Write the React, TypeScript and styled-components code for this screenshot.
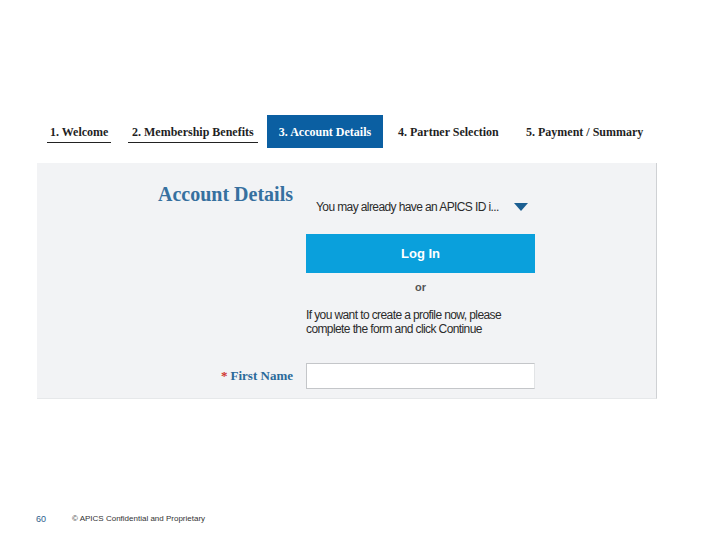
import styled, { createGlobalStyle } from "styled-components";

const GlobalStyle = createGlobalStyle`
  html, body {
    margin: 0;
    padding: 0;
    background: #ffffff;
  }
  body {
    font-family: "Liberation Sans", Arial, sans-serif;
  }
`;

const Page = styled.div`
  width: 720px;
  min-height: 540px;
  display: flex;
  flex-direction: column;
  padding-top: 115px;
  box-sizing: border-box;
`;

const Steps = styled.div`
  display: grid;
  grid-template-columns: 81px 139px 116px 143px auto;
  height: 33px;
  margin-left: 47px;
  margin-right: 63px;
`;

const Step = styled.div<{ $state: "done" | "active" | "todo"; $indent?: number }>`
  display: flex;
  align-items: ${(p) => (p.$state === "done" ? "flex-end" : "center")};
  justify-content: ${(p) => (p.$state === "active" ? "center" : "flex-start")};
  padding-bottom: ${(p) => (p.$state === "done" ? "5px" : "0")};
  padding-left: ${(p) => p.$indent ?? 0}px;
  background: ${(p) => (p.$state === "active" ? "#0b5fa2" : "transparent")};
  color: ${(p) => (p.$state === "active" ? "#ffffff" : "#1f1f1f")};
  font-family: "Liberation Serif", "DejaVu Serif", serif;
  font-weight: bold;
  font-size: 12px;
  line-height: 14px;
  white-space: nowrap;
`;

const StepLabel = styled.span<{ $underline?: boolean; $pad?: number }>`
  padding: 0 ${(p) => p.$pad ?? 0}px 3px;
  border-bottom: ${(p) => (p.$underline ? "1px solid #222" : "none")};
`;

const Panel = styled.div`
  margin: 15px 0 0 37px;
  width: 620px;
  box-sizing: border-box;
  background: #f2f3f5;
  border-right: 1px solid #cfd1d4;
  border-bottom: 1px solid #e6e8ea;
  padding: 20px 0 9px;
  display: grid;
  grid-template-columns: 256px 229px;
  column-gap: 13px;
  row-gap: 27px;
`;

const Heading = styled.h2`
  margin: 0;
  text-align: right;
  align-self: start;
  font-family: "Liberation Serif", "DejaVu Serif", serif;
  font-weight: bold;
  font-size: 20px;
  line-height: 22px;
  color: #36709f;
`;

const Stack = styled.div`
  display: flex;
  flex-direction: column;
`;

const Select = styled.div`
  margin-top: 14px;
  height: 20px;
  display: flex;
  align-items: center;
  justify-content: space-between;
  padding: 0 7px 0 10px;
  font-size: 12px;
  letter-spacing: -0.6px;
  white-space: nowrap;
  color: #2b2b2b;
`;

const Caret = styled.svg`
  width: 14px;
  height: 8px;
  flex: none;
`;

const LoginButton = styled.button`
  margin-top: 17px;
  height: 39px;
  border: none;
  background: #0aa0dc;
  color: #ffffff;
  font-family: "Liberation Sans", Arial, sans-serif;
  font-weight: bold;
  font-size: 13px;
  padding: 0;
  cursor: pointer;
`;

const Or = styled.div`
  margin-top: 6px;
  text-align: center;
  font-weight: bold;
  font-size: 11px;
  line-height: 16px;
  color: #555;
`;

const Note = styled.p`
  margin: 13px 0 0;
  font-size: 12px;
  line-height: 14px;
  letter-spacing: -0.6px;
  color: #2b2b2b;
`;

const FieldLabel = styled.label`
  align-self: center;
  text-align: right;
  font-family: "Liberation Serif", "DejaVu Serif", serif;
  font-weight: bold;
  font-size: 13px;
  color: #2b6a9a;
`;

const Required = styled.span`
  color: #d0312d;
  margin-right: 3px;
`;

const TextInput = styled.input`
  height: 26px;
  box-sizing: border-box;
  border: 1px solid #c4c6c9;
  border-right-color: #e2e4e6;
  background: #ffffff;
  padding: 0 6px;
  font-size: 12px;
`;

const Footer = styled.div`
  margin-top: auto;
  padding: 0 0 15px 36px;
  display: flex;
  align-items: center;
  font-size: 8px;
  line-height: 12px;
  color: #333;
`;

const PageNo = styled.span`
  width: 36px;
  font-size: 9px;
  color: #2d5e8c;
`;

export default function App() {
  return (
    <>
      <GlobalStyle />
      <Page>
        <Steps>
          <Step $state="done">
            <StepLabel $underline $pad={3}>1. Welcome</StepLabel>
          </Step>
          <Step $state="done">
            <StepLabel $underline $pad={4}>2. Membership Benefits</StepLabel>
          </Step>
          <Step $state="active">3. Account Details</Step>
          <Step $state="todo" $indent={15}>4. Partner Selection</Step>
          <Step $state="todo">5. Payment / Summary</Step>
        </Steps>

        <Panel>
          <Heading>Account Details</Heading>
          <Stack>
            <Select>
              <span>You may already have an APICS ID i...</span>
              <Caret viewBox="0 0 14 8">
                <path d="M0 0 H14 L7 8 Z" fill="#1b5f92" />
              </Caret>
            </Select>
            <LoginButton>Log In</LoginButton>
            <Or>or</Or>
            <Note>
              If you want to create a profile now, please complete the form and
              click Continue
            </Note>
          </Stack>

          <FieldLabel htmlFor="first-name">
            <Required>*</Required>First Name
          </FieldLabel>
          <TextInput id="first-name" type="text" />
        </Panel>

        <Footer>
          <PageNo>60</PageNo>
          <span>© APICS Confidential and Proprietary</span>
        </Footer>
      </Page>
    </>
  );
}
